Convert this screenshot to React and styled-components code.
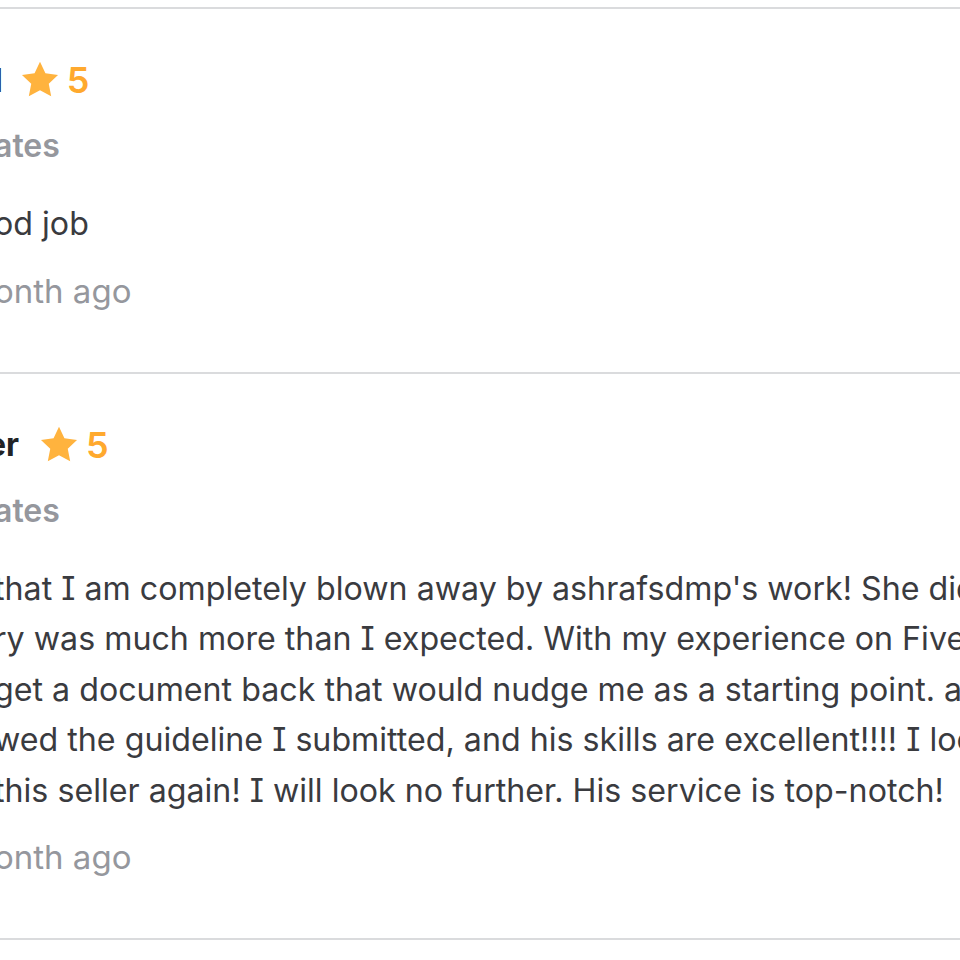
import React from "react";
import styled, { createGlobalStyle } from "styled-components";

const Global = createGlobalStyle`
  html, body { margin: 0; padding: 0; background: #fff; }
  body {
    font-family: Inter, "Noto Sans", sans-serif;
    font-feature-settings: "cv08" 1;
  }
`;

const Page = styled.div`
  width: 960px;
  height: 960px;
  overflow: hidden;
  background: #fff;
  padding-top: 7px;
  box-sizing: border-box;
`;

const List = styled.div`
  display: flex;
  flex-direction: column;
  margin-left: -6px;
  width: 1400px;
`;

const Divider = styled.div`
  height: 2px;
  background: #dadbdd;
`;

const Review = styled.article`
  display: flex;
  flex-direction: column;
  padding: 46px 0 56px;
`;

const Header = styled.div`
  display: flex;
  align-items: center;
  height: 50px;
  gap: ${(p) => p.$gap}px;
`;

const Name = styled.span`
  margin-left: ${(p) => p.$shift}px;
  font-size: 32px;
  font-weight: 700;
  color: #222325;
  white-space: nowrap;
`;

const Rating = styled.span`
  display: flex;
  align-items: center;
  gap: 6px;
  font-size: 36px;
  font-weight: 600;
  color: #ffa92e;
`;

const Country = styled.div`
  margin-top: 16px;
  height: 50px;
  line-height: 50px;
  font-size: 32px;
  font-weight: 600;
  color: #95979d;
  white-space: nowrap;
`;

const Body = styled.div`
  margin-top: 28px;
  display: flex;
  flex-direction: column;
`;

const Line = styled.span`
  font-size: 32.2px;
  line-height: 50.5px;
  color: #3a3b3f;
  white-space: nowrap;
`;

const Time = styled.div`
  margin-top: 16px;
  height: 50px;
  line-height: 50px;
  font-size: 33px;
  color: #95979d;
  white-space: nowrap;
`;

const Star = () => (
  <svg width="42" height="42" viewBox="0 0 24 24" aria-hidden="true">
    <path
      fill="#ffb33e"
      d="M12 1.6l3.1 6.6 7.2.9-5.3 5 1.4 7.2L12 17.8l-6.4 3.5 1.4-7.2-5.3-5 7.2-.9z"
    />
  </svg>
);

const reviews = [
  {
    name: "l",
    shift: 0,
    gap: 16,
    country: "ates",
    lines: ["od job"],
    time: "onth ago",
  },
  {
    name: "er",
    shift: -7,
    gap: 19,
    country: "ates",
    lines: [
      "that I am completely blown away by ashrafsdmp's work! She did",
      "ry was much more than I expected. With my experience on Fiverr,",
      "get a document back that would nudge me as a starting point. ashrafsdmp",
      "wed the guideline I submitted, and his skills are excellent!!!! I look forward to",
      "this seller again! I will look no further. His service is top-notch!",
    ],
    time: "onth ago",
  },
];

export default function App() {
  return (
    <>
      <Global />
      <Page>
        <List>
          <Divider />
          {reviews.map((r, i) => (
            <React.Fragment key={i}>
              <Review>
                <Header $gap={r.gap}>
                  <Name $shift={r.shift}>{r.name}</Name>
                  <Rating>
                    <Star />
                    5
                  </Rating>
                </Header>
                <Country>{r.country}</Country>
                <Body>
                  {r.lines.map((l, j) => (
                    <Line key={j}>{l}</Line>
                  ))}
                </Body>
                <Time>{r.time}</Time>
              </Review>
              <Divider />
            </React.Fragment>
          ))}
        </List>
      </Page>
    </>
  );
}
